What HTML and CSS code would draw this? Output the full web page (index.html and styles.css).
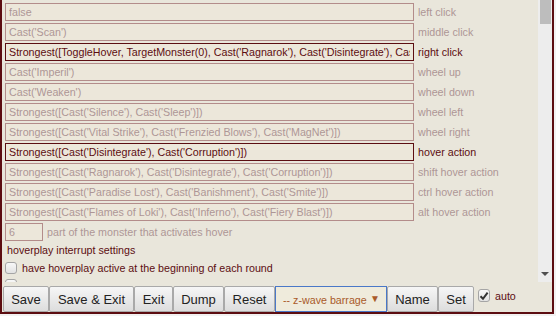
FILE: index.html
```html
<!DOCTYPE html>
<html>
<head>
<meta charset="utf-8">
<link rel="stylesheet" href="styles.css">
</head>
<body>
<div class="frame">
  <div class="panel">
    <div class="content">
      <div class="row"><input class="field" readonly value="false"><span class="lbl">left click</span></div>
      <div class="row"><input class="field" readonly value="Cast('Scan')"><span class="lbl">middle click</span></div>
      <div class="row on"><input class="field" readonly value="Strongest([ToggleHover, TargetMonster(0), Cast('Ragnarok'), Cast('Disintegrate'), Cast('Corruption')])"><span class="lbl">right click</span></div>
      <div class="row"><input class="field" readonly value="Cast('Imperil')"><span class="lbl">wheel up</span></div>
      <div class="row"><input class="field" readonly value="Cast('Weaken')"><span class="lbl">wheel down</span></div>
      <div class="row"><input class="field" readonly value="Strongest([Cast('Silence'), Cast('Sleep')])"><span class="lbl">wheel left</span></div>
      <div class="row"><input class="field" readonly value="Strongest([Cast('Vital Strike'), Cast('Frenzied Blows'), Cast('MagNet')])"><span class="lbl">wheel right</span></div>
      <div class="row on"><input class="field" readonly value="Strongest([Cast('Disintegrate'), Cast('Corruption')])"><span class="lbl">hover action</span></div>
      <div class="row"><input class="field" readonly value="Strongest([Cast('Ragnarok'), Cast('Disintegrate'), Cast('Corruption')])"><span class="lbl">shift hover action</span></div>
      <div class="row"><input class="field" readonly value="Strongest([Cast('Paradise Lost'), Cast('Banishment'), Cast('Smite')])"><span class="lbl">ctrl hover action</span></div>
      <div class="row"><input class="field" readonly value="Strongest([Cast('Flames of Loki'), Cast('Inferno'), Cast('Fiery Blast')])"><span class="lbl">alt hover action</span></div>
      <div class="row"><input class="field small" readonly value="6"><span class="lbl">part of the monster that activates hover</span></div>
      <div class="heading">hoverplay interrupt settings</div>
      <div class="check-row"><span class="cb"></span><span>have hoverplay active at the beginning of each round</span></div>
      <div class="check-row"><span class="cb"></span></div>
    </div>
    <div class="scrollbar">
      <div class="thumb"></div>
      <svg class="arrow" width="8" height="4" viewBox="0 0 8 4"><polygon points="0,0 8,0 4,4" fill="#505050"/></svg>
    </div>
  </div>
  <div class="toolbar">
    <button class="btn w46">Save</button>
    <button class="btn w85">Save &amp; Exit</button>
    <button class="btn w39">Exit</button>
    <button class="btn w51">Dump</button>
    <button class="btn w51">Reset</button>
    <div class="select"><span>-- z-wave barrage</span><span class="caret">▼</span></div>
    <button class="btn w51">Name</button>
    <button class="btn w36">Set</button>
    <label class="auto"><span class="cb checked"><svg width="10" height="10" viewBox="0 0 10 10"><path d="M1.5 5.2 L4 7.8 L8.6 1.6" fill="none" stroke="#333" stroke-width="2"/></svg></span>auto</label>
  </div>
</div>
</body>
</html>
```

FILE: styles.css
```css
html, body {
  margin: 0;
  padding: 0;
  background: #f2f2f2;
}
body {
  width: 556px;
  height: 316px;
  overflow: hidden;
  font-family: "Liberation Sans", Arial, sans-serif;
  font-size: 10.7px;
}
.frame {
  box-sizing: border-box;
  width: 554px;
  height: 314px;
  background: #e9e6db;
  border: 2px solid #5c0d11;
  border-top: none;
  display: flex;
  flex-direction: column;
}
.panel {
  display: flex;
  height: 282px;
  flex: none;
}
.content {
  flex: 1;
  overflow: hidden;
  padding: 3px 0 0 3px;
}
.row {
  display: flex;
  align-items: center;
  height: 18px;
  margin-bottom: 2px;
  color: #ae9696;
}
.row.on {
  color: #5c0d11;
}
.field {
  box-sizing: border-box;
  width: 409px;
  height: 18px;
  margin: 0;
  padding: 0 3px;
  border: 1px solid #b38c8a;
  background: #ece7da;
  color: #ae9696;
  font-family: "Liberation Sans", Arial, sans-serif;
  font-size: 10.7px;
  outline: none;
  flex: none;
}
.row.on .field {
  border-color: #5c0d11;
  color: #5c0d11;
}
.field.small {
  width: 38px;
}
.lbl {
  margin-left: 4px;
  white-space: nowrap;
}
.heading {
  color: #5c0d11;
  line-height: 14px;
  margin: 1px 0 0 2px;
}
.check-row {
  display: flex;
  align-items: center;
  gap: 5px;
  height: 13px;
  margin-top: 4px;
  color: #5c0d11;
  white-space: nowrap;
}
.cb {
  box-sizing: border-box;
  display: inline-flex;
  align-items: center;
  justify-content: center;
  width: 12px;
  height: 12px;
  border: 1px solid #a5a5a5;
  border-radius: 3px;
  background: linear-gradient(#f8f8f8, #e2e2e2);
  flex: none;
}
.scrollbar {
  width: 14px;
  flex: none;
  background: #ededed;
  display: flex;
  flex-direction: column;
  justify-content: space-between;
  align-items: center;
}
.thumb {
  width: 11px;
  height: 24px;
  background: #bdbdbd;
  margin-left: 1px;
}
.arrow {
  display: block;
  margin-bottom: 6px;
}
.toolbar {
  display: flex;
  align-items: flex-start;
  padding: 4px 0 0 1px;
}
.btn {
  box-sizing: border-box;
  height: 26px;
  margin: 0;
  padding: 0;
  border: 1px solid #a9a9a9;
  border-radius: 2px;
  background: linear-gradient(#f6f6f6, #dddddd);
  color: #222;
  font-family: "Liberation Sans", Arial, sans-serif;
  font-size: 13px;
  text-align: center;
  flex: none;
}
.w46 { width: 46px; }
.w85 { width: 85px; }
.w39 { width: 39px; }
.w51 { width: 51px; }
.w36 { width: 36px; }
.select {
  box-sizing: border-box;
  width: 112px;
  height: 26px;
  flex: none;
  border: 1px solid #4a78c8;
  background: #efebdc;
  color: #a95a2a;
  display: flex;
  align-items: center;
  justify-content: space-between;
  padding: 2px 6px 0 7px;
  font-size: 10.7px;
}
.caret {
  font-size: 10px;
  margin-top: -3px;
}
.auto {
  display: flex;
  align-items: center;
  gap: 5px;
  margin: 3px 0 0 4px;
  color: #5c0d11;
}
.cb.checked {
  width: 12px;
  height: 13px;
}
```
